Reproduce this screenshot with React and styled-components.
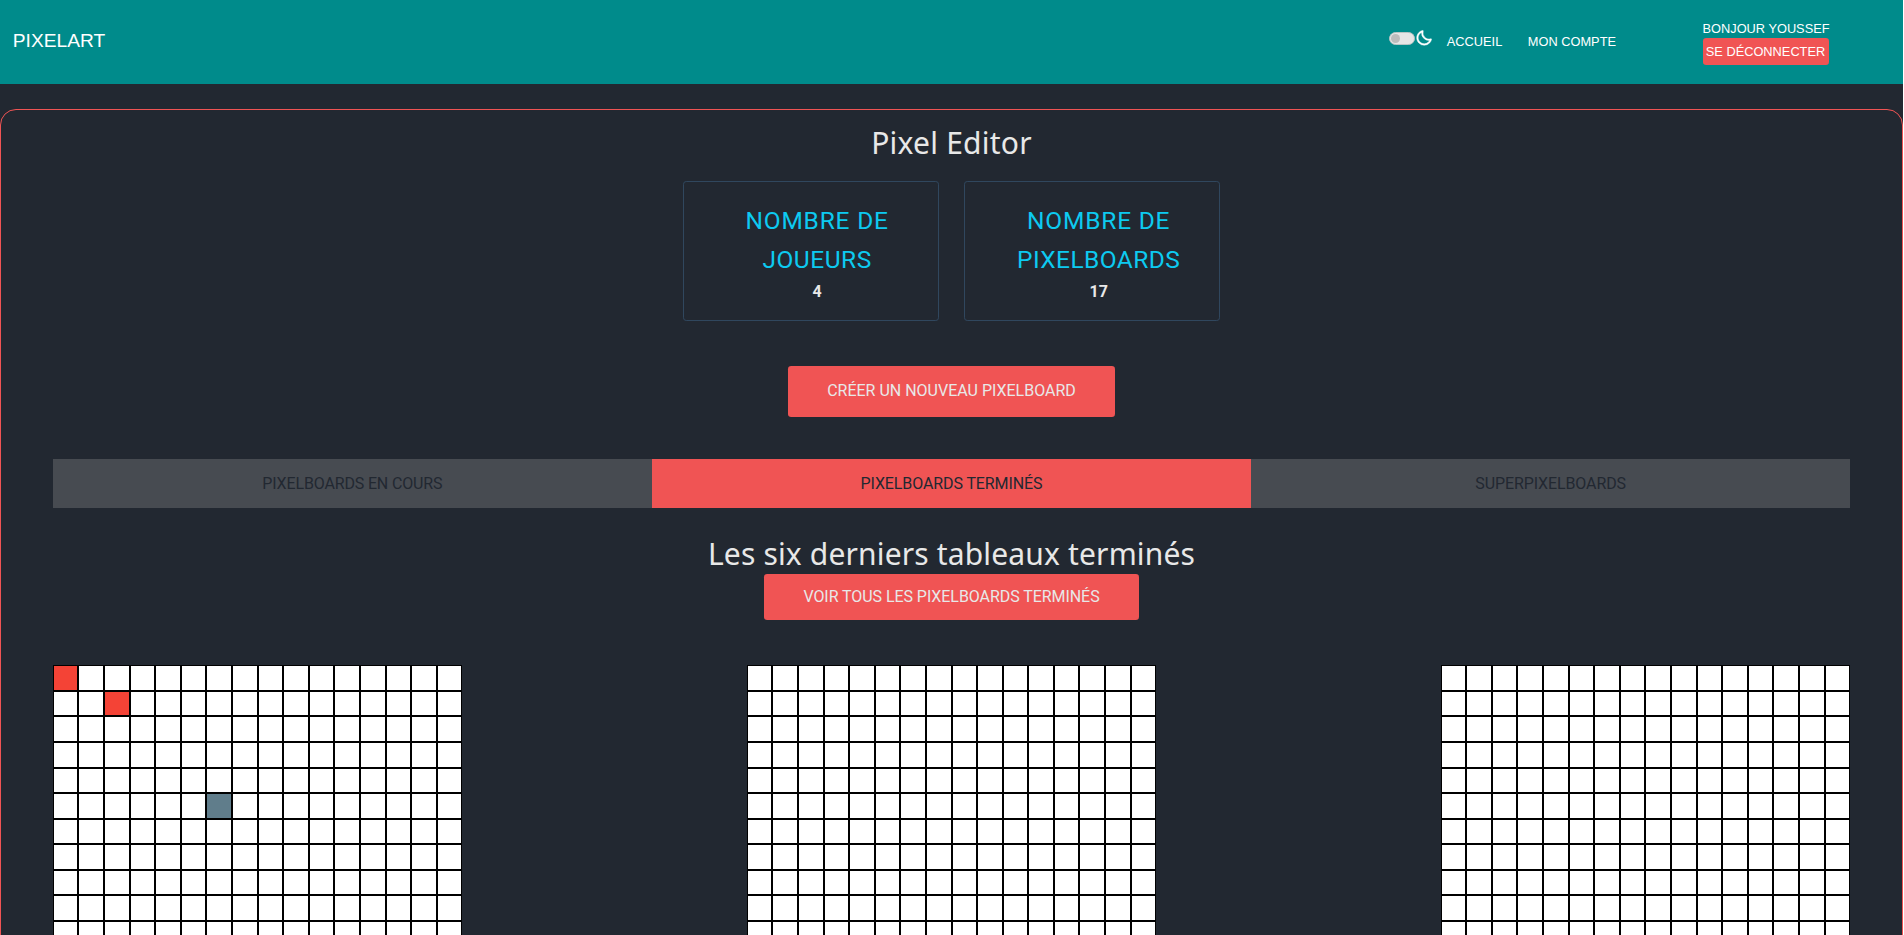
import React from "react";
import styled, { createGlobalStyle } from "styled-components";
import { BiMoon } from "react-icons/bi";

const color = {
  header: "#008b8b",
  background: "#222831",
  accent: "#f05454",
  text: "#e8e8e8",
  cyan: "#0dcaf0",
  cardBorder: "#30475e",
  tab: "#474b51",
};

const GlobalStyle = createGlobalStyle`
  * { box-sizing: border-box; }
  body {
    margin: 0;
    background: #fff;
    overflow: hidden;
  }
`;

const Page = styled.div`
  width: calc(100% - 1px);
  height: 935px;
  overflow: hidden;
  background: ${color.background};
  color: ${color.text};
  font-family: Roboto, "Noto Sans", sans-serif;
  font-size: 16px;
`;

const Header = styled.header`
  display: flex;
  align-items: flex-start;
  height: 84px;
  padding: 0 73.5px 0 12.8px;
  background: ${color.header};
  color: #fff;
  font-family: "Liberation Sans", Arial, sans-serif;
  font-size: 12.8px;
  line-height: 20px;
  text-transform: uppercase;
`;

const Brand = styled.div`
  margin-right: auto;
  padding-top: 31px;
  font-size: 19.2px;
`;

const ThemeSwitch = styled.div`
  display: flex;
  padding-top: 30px;
`;

const Track = styled.span`
  display: flex;
  align-items: center;
  width: 26px;
  height: 13px;
  margin-top: 2px;
  padding: 0 1px;
  border: 1px solid #b8c4c4;
  border-radius: 7px;
  background: #e6e6e6;
`;

const Knob = styled.span`
  width: 9px;
  height: 9px;
  border-radius: 50%;
  background: #bcbcbc;
`;

const MoonIcon = styled(BiMoon)`
  display: block;
  width: 18px;
  height: 18px;
  margin-top: -1px;
  stroke: currentColor;
  stroke-width: 0.6px;
`;

const Nav = styled.nav`
  display: flex;
  gap: 25.6px;
  margin: 31.5px 86.5px 0 13.5px;
`;

const NavItem = styled.span`
  white-space: nowrap;
`;

const Account = styled.div`
  width: 127px;
  padding-top: 19px;
  white-space: nowrap;
`;

const Logout = styled.button`
  display: block;
  width: 126px;
  height: 27px;
  margin-top: -1px;
  padding: 0;
  border: 0;
  border-radius: 3.2px;
  background: ${color.accent};
  color: #fff;
  font: inherit;
  text-transform: uppercase;
`;

const Main = styled.main`
  height: 1400px;
  margin-top: 25px;
  padding: 14px 51.8px 0;
  border: 1px solid ${color.accent};
  border-radius: 16px;
`;

const Title = styled.h1`
  margin: 0;
  font-family: "Noto Sans", "Open Sans", sans-serif;
  font-size: 30px;
  font-weight: 400;
  line-height: 38px;
  letter-spacing: ${(p) => p.$spacing}px;
  text-align: center;
`;

const Stats = styled.section`
  display: flex;
  justify-content: center;
  gap: 25.6px;
  margin-top: 19px;
`;

const StatCard = styled.article`
  width: 256px;
  height: 140px;
  padding: 19px 25.6px 0 38.4px;
  border: 1px solid ${color.cardBorder};
  border-radius: 3.2px;
  text-align: center;
`;

const StatLine = styled.div`
  color: ${color.cyan};
  font-size: 24.5px;
  line-height: 39px;
  letter-spacing: ${(p) => p.$spacing}px;
  white-space: nowrap;
`;

const StatValue = styled.div`
  font-weight: 700;
  line-height: 25px;
`;

const ActionButton = styled.button`
  display: block;
  width: ${(p) => p.$width}px;
  height: ${(p) => p.$height}px;
  margin: ${(p) => p.$top}px auto 0;
  padding: 0 0 2px;
  border: 0;
  border-radius: 3.2px;
  background: ${color.accent};
  color: ${color.text};
  font: inherit;
  letter-spacing: ${(p) => p.$spacing}px;
  white-space: nowrap;
`;

const Tabs = styled.div`
  display: grid;
  grid-template-columns: repeat(3, 1fr);
  height: 49px;
  margin: 42px 0 27px;
`;

const Tab = styled.button`
  padding: 0;
  border: 0;
  background: ${(p) => (p.$active ? color.accent : color.tab)};
  color: ${color.background};
  font: inherit;
  letter-spacing: ${(p) => p.$spacing}px;
`;

const Boards = styled.section`
  display: flex;
  justify-content: space-between;
  margin-top: 45.14px;
`;

const Board = styled.div`
  display: grid;
  grid-template-columns: repeat(16, 25.6px);
  grid-auto-rows: 25.6px;
`;

const Pixel = styled.span`
  border: 1px solid #000;
  background: ${(p) => p.$fill};
`;

const SIZE = 16;

const boards = [
  { id: "a", painted: { 0: "#f44336", 18: "#f44336", 86: "#607d8b" } },
  { id: "b", painted: {} },
  { id: "c", painted: {} },
];

const stats = [
  { lines: [["NOMBRE DE", 0.8], ["JOUEURS", 0.5]], value: 4 },
  { lines: [["NOMBRE DE", 0.8], ["PIXELBOARDS", 0.45]], value: 17 },
];

function PixelBoard({ painted }) {
  return (
    <Board>
      {Array.from({ length: SIZE * SIZE }, (_, i) => (
        <Pixel key={i} $fill={painted[i] || "#fff"} />
      ))}
    </Board>
  );
}

export default function App() {
  return (
    <>
      <GlobalStyle />
      <Page>
        <Header>
          <Brand>PixelArt</Brand>
          <ThemeSwitch>
            <Track><Knob /></Track>
            <MoonIcon />
          </ThemeSwitch>
          <Nav>
            <NavItem>Accueil</NavItem>
            <NavItem>Mon compte</NavItem>
          </Nav>
          <Account>
            Bonjour Youssef
            <Logout>Se déconnecter</Logout>
          </Account>
        </Header>
        <Main>
          <Title $spacing={0.22}>Pixel Editor</Title>
          <Stats>
            {stats.map((stat) => (
              <StatCard key={stat.value}>
                {stat.lines.map(([text, spacing]) => (
                  <StatLine key={text} $spacing={spacing}>{text}</StatLine>
                ))}
                <StatValue>{stat.value}</StatValue>
              </StatCard>
            ))}
          </Stats>
          <ActionButton $width={327} $height={51} $top={45} $spacing={0}>
            CRÉER UN NOUVEAU PIXELBOARD
          </ActionButton>
          <Tabs>
            <Tab $spacing={-0.15}>PIXELBOARDS EN COURS</Tab>
            <Tab $active $spacing={-0.1}>PIXELBOARDS TERMINÉS</Tab>
            <Tab $spacing={-0.1}>SUPERPIXELBOARDS</Tab>
          </Tabs>
          <Title $spacing={0.16}>Les six derniers tableaux terminés</Title>
          <ActionButton $width={375} $height={46} $top={1} $spacing={-0.06}>
            VOIR TOUS LES PIXELBOARDS TERMINÉS
          </ActionButton>
          <Boards>
            {boards.map((board) => (
              <PixelBoard key={board.id} painted={board.painted} />
            ))}
          </Boards>
        </Main>
      </Page>
    </>
  );
}
